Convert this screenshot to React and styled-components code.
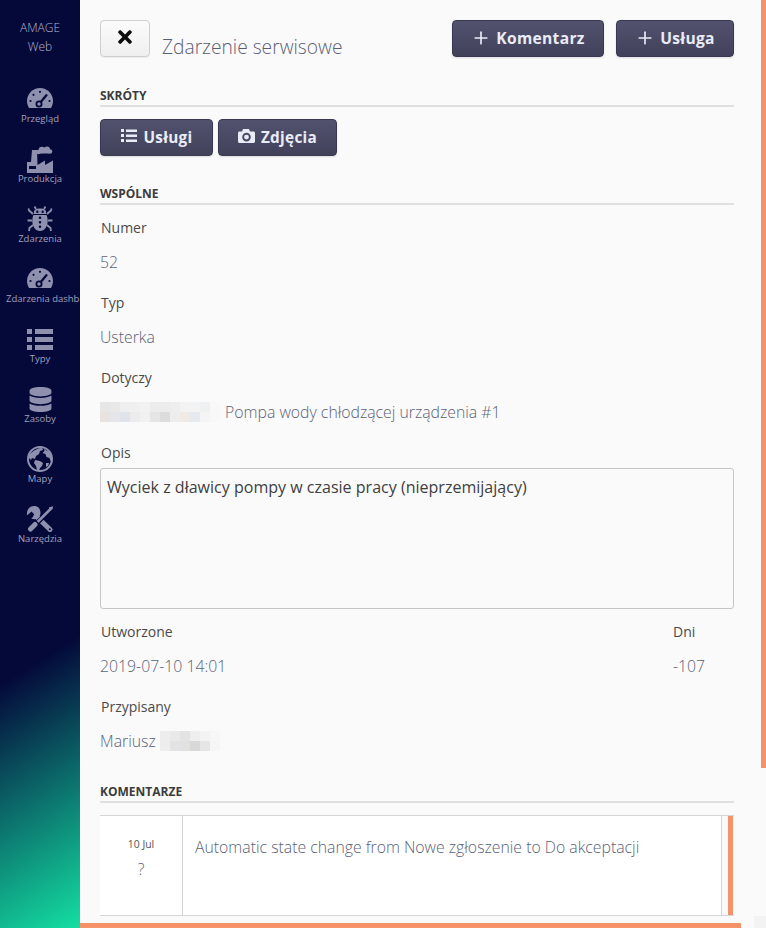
import React from "react";
import styled, { createGlobalStyle } from "styled-components";
import { FaDatabase, FaTimes } from "react-icons/fa";
import { Plus } from "lucide-react";

const Global = createGlobalStyle`
  html, body { margin: 0; padding: 0; height: 100%; background: #fafafa; overflow: hidden; }
  * { box-sizing: border-box; }
  body { font-family: "Open Sans", "Liberation Sans", sans-serif; }
`;

const DARK = "#04093a";

const Page = styled.div`
  position: relative;
  display: flex;
  width: 766px;
  height: 928px;
  overflow: hidden;
  background: #fafafa;
`;
const Sidebar = styled.nav`
  flex: 0 0 80px;
  width: 80px;
  padding-top: 18px;
  overflow: hidden;
  background: linear-gradient(148deg, #04093a 0%, #04093a 70%, #14dfa2 100%);
`;
const Brand = styled.div`
  text-align: center;
  font-size: 12px;
  line-height: 19px;
  height: 68px;
  font-weight: 300;
  color: #b4b4cc;
`;
const NavItem = styled.a`
  display: flex;
  flex-direction: column;
  align-items: center;
  height: 60px;
  white-space: nowrap;
  width: 80px;
  overflow: hidden;
`;
const NavIcon = styled.span`
  display: flex;
  align-items: center;
  justify-content: center;
  width: 100%;
  height: 26px;
  color: #8f8fae;
`;
const NavLabel = styled.span`
  font-size: 9.5px;
  line-height: 14px;
  color: #a0a0bc;
  align-self: ${(p) => (p.$clip ? "flex-start" : "center")};
  padding-left: ${(p) => (p.$clip ? "6px" : "0")};
`;
const Main = styled.main`
  flex: 1;
  padding: 20px 32px 0 20px;
  min-width: 0;
`;
const TopRow = styled.header`
  display: flex;
  align-items: flex-start;
  height: 37px;
`;
const CloseButton = styled.button`
  width: 50px;
  height: 37px;
  padding: 0 0 4px;
  display: flex;
  align-items: center;
  justify-content: center;
  border: 1px solid #cfcfcf;
  border-radius: 4px;
  background: linear-gradient(#fbfbfb, #efefef);
  box-shadow: 0 1px 1px rgba(0, 0, 0, 0.06);
  color: #0c0c0c;
  font-size: 20px;
`;
const Title = styled.h1`
  margin: 15px 0 0 12px;
  font-size: 19.2px;
  line-height: 24px;
  font-weight: 300;
  color: #5a5f78;
  flex: 1;
`;
const Button = styled.button`
  display: inline-flex;
  align-items: center;
  justify-content: center;
  gap: ${(p) => p.$gap || 6}px;
  width: ${(p) => p.$w}px;
  height: 37px;
  padding: 0 0 1px;
  margin-left: ${(p) => p.$ml || 0}px;
  border: 1px solid #383850;
  border-radius: 4px;
  background: linear-gradient(#52526f, #41415a);
  box-shadow: 0 1px 2px rgba(0, 0, 0, 0.12);
  color: #e9ebf6;
  font-family: inherit;
  font-size: ${(p) => p.$fs || 15.3}px;
  font-weight: 700;
  letter-spacing: 0.3px;
`;
const ButtonIcon = styled.svg`
  flex: none;
  margin-bottom: 3px;
`;
const Section = styled.h2`
  margin: ${(p) => p.$mt}px 0 0;
  height: 22px;
  font-size: 12px;
  line-height: 22px;
  font-weight: 700;
  color: #3c3c3c;
  border-bottom: 2px solid #e0e0e0;
`;
const ButtonRow = styled.div`
  display: flex;
  gap: 5px;
  margin-top: 12px;
`;
const Fields = styled.div`
  margin-top: 13px;
`;
const Field = styled.div`
  height: ${(p) => p.$h || 75}px;
  flex: ${(p) => (p.$grow ? 1 : "none")};
  width: ${(p) => (p.$w ? p.$w + "px" : "auto")};
`;
const Label = styled.div`
  font-size: 14px;
  line-height: 20px;
  padding-left: ${(p) => (p.$flush ? 0 : 1)}px;
  color: #4a4a4a;
`;
const Value = styled.div`
  display: flex;
  align-items: center;
  margin-top: 14px;
  font-size: 15.8px;
  line-height: 20px;
  font-weight: 300;
  color: #5a6278;
  white-space: nowrap;
`;
const TextBox = styled.div`
  margin: 5px 0 13px;
  height: 141px;
  padding: 6px;
  border: 1px solid #c6c6c6;
  border-radius: 3px;
  font-size: 16.05px;
  line-height: 24px;
  color: #404040;
`;
const FieldRow = styled.div`
  display: flex;
`;
const Mosaic = styled.span`
  display: inline-grid;
  grid-template-columns: repeat(${(p) => p.$cols}, ${(p) => p.$cell}px);
  grid-auto-rows: ${(p) => p.$cell}px;
  flex: none;
  margin-right: ${(p) => p.$mr || 0}px;
`;
const Tile = styled.i`
  display: block;
`;
const Comments = styled.div`
  margin-top: 12px;
  display: flex;
  height: 101px;
  border-top: 1px solid #d5d5d5;
  border-bottom: 1px solid #d5d5d5;
`;
const CommentCard = styled.div`
  display: flex;
  width: 622px;
  background: #fff;
  border-right: 1px solid #d5d5d5;
`;
const DateCell = styled.div`
  width: 83px;
  border-right: 1px solid #d5d5d5;
  text-align: center;
  padding-top: 20px;
  font-weight: 300;
  color: #5a6278;
`;
const DateText = styled.div`
  font-size: 10.4px;
  line-height: 16px;
  font-weight: 400;
  color: #555;
`;
const Author = styled.div`
  margin-top: 6px;
  font-size: 16px;
  line-height: 22px;
`;
const CommentText = styled.div`
  padding: 20px 0 0 12px;
  font-size: 15.8px;
  line-height: 22px;
  font-weight: 300;
  color: #5a6278;
`;
const Accent = styled.div`
  width: 5px;
  margin-left: 6px;
  background: #f59269;
`;
const ScrollV = styled.div`
  position: absolute;
  right: 0;
  top: 0;
  width: 5px;
  height: 768px;
  background: #f59269;
`;
const ScrollH = styled.div`
  position: absolute;
  left: 80px;
  bottom: 0;
  width: 661px;
  height: 5px;
  background: #f59269;
`;
const Corner = styled.div`
  position: absolute;
  right: 0;
  bottom: 0;
  width: 12px;
  height: 12px;
  background: #f3f3f3;
`;

const Gauge = () => (
  <svg width="26" height="22" viewBox="0 0 26 22" fill="currentColor">
    <path d="M13 0C5.800 0 0 5.800 0 13c0 2.500.7 4.800 2 7h22c1.300-2.200 2-4.500 2-7C26 5.800 20.200 0 13 0z" />
    <g fill={DARK}>
      <circle cx="3.500" cy="13" r="1.100" />
      <circle cx="6.500" cy="6.800" r="1.100" />
      <circle cx="13" cy="3.800" r="1.100" />
      <circle cx="22.500" cy="13" r="1.100" />
    </g>
    <circle cx="12" cy="16" r="2.600" fill="none" stroke={DARK} strokeWidth="1.800" />
    <path d="M13.800 14 20 6.500" stroke={DARK} strokeWidth="2.200" />
  </svg>
);
const Factory = () => (
  <svg width="26" height="27" viewBox="0 0 26 27" fill="currentColor">
    <path
      fillRule="evenodd"
      d="M0 27V16h4L5 4h5l.5 15L18 14.500V19l8-4.500V27H0zm2-7v3h7v-3H2z"
    />
    <circle cx="11.500" cy="6" r="2.300" />
    <circle cx="15" cy="4" r="3.300" />
    <circle cx="20" cy="3.500" r="3" />
    <circle cx="23" cy="5.500" r="2.300" />
    <rect x="13" y="4" width="9" height="3.500" />
  </svg>
);
const Bug = () => (
  <svg width="26" height="26" viewBox="0 0 26 26" fill="currentColor">
    <path
      fillRule="evenodd"
      d="M7 5.500C7.500 3.500 9 2.500 13 2.500s5.500 1 6 3l.3 2.500H6.700L7 5.500zM10.300 4.500a1.200 1.200 0 1 0 0 2.400 1.200 1.200 0 0 0 0-2.400zm5.400 0a1.200 1.200 0 1 0 0 2.400 1.200 1.200 0 0 0 0-2.400z"
    />
    <path
      fillRule="evenodd"
      d="M6.500 9h13c.8 1.500 1.200 3.500 1.200 6 0 5-3 10-7.700 10S5.300 20 5.300 15c0-2.500.4-4.500 1.200-6zM13 10.500a1.300 1.300 0 1 0 0 2.600 1.300 1.300 0 0 0 0-2.600zm0 4.500a1.300 1.300 0 1 0 0 2.600 1.300 1.300 0 0 0 0-2.600zm0 4.500a1.300 1.300 0 1 0 0 2.600 1.300 1.300 0 0 0 0-2.600z"
    />
    <path
      d="M9 3 7.500 0.500M17 3l1.500-2.500M6 8 2 4.500 1.500 2.500M20 8l4-3.500.5-2M5 14.500H.5M21 14.500h4.500M6 19l-3.500 3-.5 3M20 19l3.500 3 .5 3"
      stroke="currentColor"
      strokeWidth="1.800"
      fill="none"
    />
  </svg>
);
const ListBars = () => (
  <svg width="26" height="21" viewBox="0 0 26 21" fill="currentColor">
    <path d="M0 0h5v5H0zM8 0h18v5H8zM0 8h5v5H0zM8 8h18v5H8zM0 16h5v5H0zM8 16h18v5H8z" />
  </svg>
);
const Globe = () => (
  <svg width="26" height="26" viewBox="0 0 26 26" fill="currentColor">
    <circle cx="13" cy="13" r="12" fill="none" stroke="currentColor" strokeWidth="2" />
    <path d="M4 7c3-3 7-5 11-5l1 2-3 1-1 3-3 2-1 3-3-1-1 2-2-2-.500-3z" />
    <path d="M8 14l5 1 3 2-1 3-2 2-1 3-2-1-1-4-2-3z" />
    <path d="M17 3l5 3 3 5 .5 3-2 1-1-3-3-1-1-3-3-1 2-2z" />
    <path d="M19 17l3 0-1 3-2 1z" />
  </svg>
);
const Tools = () => (
  <svg width="26" height="26" viewBox="0 0 26 26" fill="currentColor">
    <path d="M7.500 0C3 0 0 3 0 7.500c0 .6 0 1.200.2 1.800L4.500 5.500 8 9l-3.800 3.600c.8.4 2 .6 3 .6 1.300 0 2.500-.4 3.500-1l1.500-1.700c.8-1 1.300-2.300 1.300-3.500C13.500 3 11 0 7.500 0z" />
    <path d="M9 10l14 13.500" stroke="currentColor" strokeWidth="5" strokeLinecap="round" />
    <circle cx="22.800" cy="23.200" r="1" fill={DARK} />
    <path d="M24 3 9 18" stroke={DARK} strokeWidth="4.600" />
    <path d="M24 2.500 9 17.500" stroke="currentColor" strokeWidth="2.600" />
    <path d="M25.800 .2 21.800 1.500l1.200 2.800 2.800-1.300z" />
    <path d="M8 18.500 3.500 23" stroke={DARK} strokeWidth="7.500" strokeLinecap="round" />
    <path d="M8 18.500 3.500 23" stroke="currentColor" strokeWidth="5" strokeLinecap="round" />
  </svg>
);
const ListSmall = () => (
  <ButtonIcon width="16" height="13" viewBox="0 0 16 13" fill="currentColor">
    <path d="M0 0h3v3H0zM5 .5h11v2.500H5zM0 5h3v3H0zM5 5.500h11V8H5zM0 10h3v3H0zM5 10.500h11V13H5z" />
  </ButtonIcon>
);
const CameraSmall = () => (
  <ButtonIcon width="17" height="14" viewBox="0 0 17 14" fill="currentColor">
    <path
      fillRule="evenodd"
      d="M5 0h6l1 2.500h3.500c.8 0 1.500.7 1.500 1.500v8.500c0 .8-.7 1.500-1.500 1.500h-14C.7 14 0 13.300 0 12.500V4c0-.8.7-1.500 1.500-1.500H4L5 0zm3.500 3.800a4.300 4.300 0 1 0 0 8.600 4.300 4.300 0 0 0 0-8.600z"
    />
    <circle cx="8.500" cy="8.100" r="2.400" />
  </ButtonIcon>
);

const navItems = [
  { label: "Przegląd", icon: <Gauge /> },
  { label: "Produkcja", icon: <Factory /> },
  { label: "Zdarzenia", icon: <Bug /> },
  { label: "Zdarzenia dashboard", icon: <Gauge />, clip: true },
  { label: "Typy", icon: <ListBars /> },
  { label: "Zasoby", icon: <FaDatabase size={25} /> },
  { label: "Mapy", icon: <Globe /> },
  { label: "Narzędzia", icon: <Tools /> },
];

const blurA = [
  "#e6e6e6", "#e8e8e8", "#efefef", "#f0f0f0", "#f2f2f2", "#ececec", "#ececec", "#eeeeee", "#f3f3f3", "#f3f3f3", "#eef0f2", "#f8f8f8",
  "#e8e2e0", "#e6e6ea", "#e0e4ea", "#ececec", "#f1f1f1", "#e5e5e5", "#dcdcdc", "#ededed", "#efeae6", "#e6eaee", "#f4f4f4", "#f8f8f8",
];
const blurB = [
  "#ededed", "#e9e9e9", "#e3e3e3", "#eeeeee", "#f3f3f3", "#f7f7f7",
  "#ededed", "#e3e3e5", "#e1e1df", "#d8d8d8", "#e6e6e6", "#f6f6f6",
];

const Blur = ({ colors, cols, cell, mr }) => (
  <Mosaic $cols={cols} $cell={cell} $mr={mr}>
    {colors.map((c, i) => (
      <Tile key={i} style={{ background: c }} />
    ))}
  </Mosaic>
);

export default function App() {
  return (
    <Page>
      <Global />
      <Sidebar>
        <Brand>
          AMAGE
          <br />
          Web
        </Brand>
        {navItems.map((n) => (
          <NavItem key={n.label}>
            <NavIcon>{n.icon}</NavIcon>
            <NavLabel $clip={n.clip}>{n.label}</NavLabel>
          </NavItem>
        ))}
      </Sidebar>
      <Main>
        <TopRow>
          <CloseButton>
            <FaTimes />
          </CloseButton>
          <Title>Zdarzenie serwisowe</Title>
          <Button $w={152} $gap={5} $fs={15.6}>
            <Plus size={20} strokeWidth={2} />
            Komentarz
          </Button>
          <Button $w={118} $ml={12} $gap={5} $fs={15.6}>
            <Plus size={20} strokeWidth={2} />
            Usługa
          </Button>
        </TopRow>
        <Section $mt={28}>SKRÓTY</Section>
        <ButtonRow>
          <Button $w={113} $gap={7}>
            <ListSmall />
            Usługi
          </Button>
          <Button $w={119}>
            <CameraSmall />
            Zdjęcia
          </Button>
        </ButtonRow>
        <Section $mt={27}>WSPÓLNE</Section>
        <Fields>
          <Field>
            <Label>Numer</Label>
            <Value>52</Value>
          </Field>
          <Field>
            <Label>Typ</Label>
            <Value>Usterka</Value>
          </Field>
          <Field>
            <Label>Dotyczy</Label>
            <Value>
              <Blur colors={blurA} cols={12} cell={10} mr={1} />
              &nbsp;Pompa wody chłodzącej urządzenia #1
            </Value>
          </Field>
          <Field $h="auto">
            <Label>Opis</Label>
            <TextBox>Wyciek z dławicy pompy w czasie pracy (nieprzemijający)</TextBox>
          </Field>
          <FieldRow>
            <Field $grow>
              <Label>Utworzone</Label>
              <Value>2019-07-10 14:01</Value>
            </Field>
            <Field $w={61}>
              <Label $flush>Dni</Label>
              <Value>-107</Value>
            </Field>
          </FieldRow>
          <Field>
            <Label>Przypisany</Label>
            <Value>
              Mariusz&nbsp;
              <Blur colors={blurB} cols={6} cell={10} />
            </Value>
          </Field>
        </Fields>
        <Section $mt={9}>KOMENTARZE</Section>
        <Comments>
          <CommentCard>
            <DateCell>
              <DateText>10 Jul</DateText>
              <Author>?</Author>
            </DateCell>
            <CommentText>Automatic state change from Nowe zgłoszenie to Do akceptacji</CommentText>
          </CommentCard>
          <Accent />
        </Comments>
      </Main>
      <ScrollV />
      <Corner />
      <ScrollH />
    </Page>
  );
}
